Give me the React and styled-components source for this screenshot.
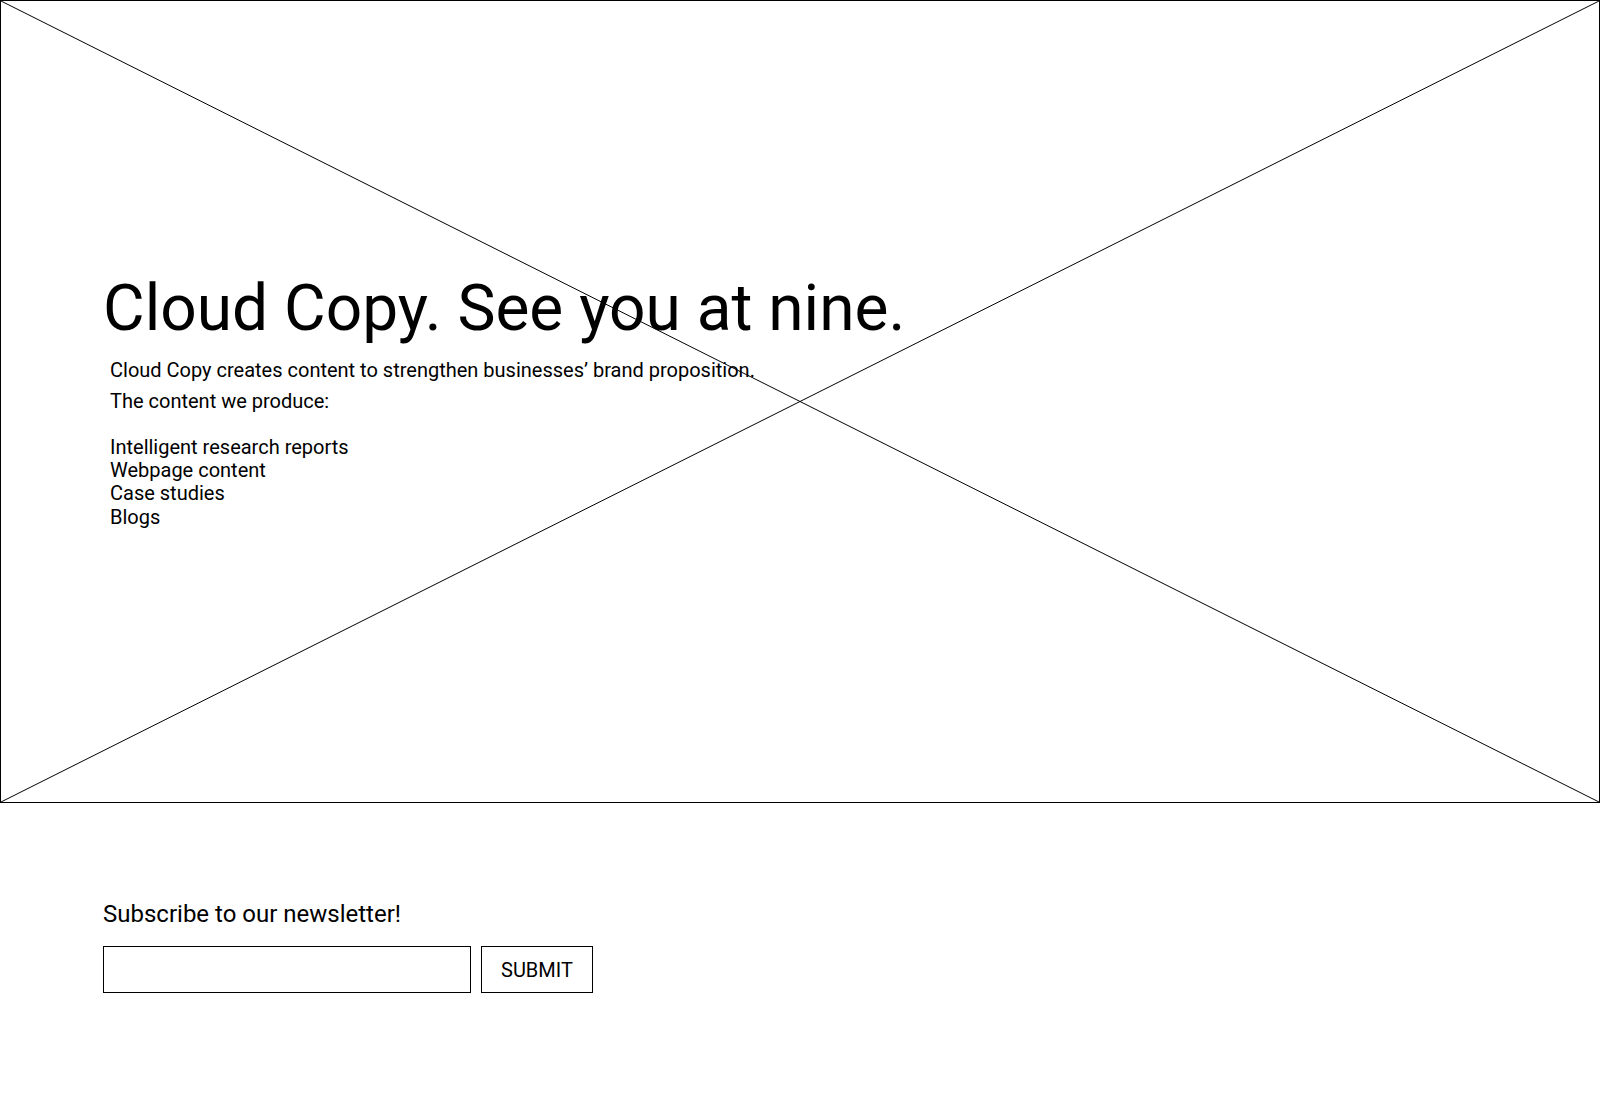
import React from "react";
import styled, { createGlobalStyle } from "styled-components";

const GlobalStyle = createGlobalStyle`
  html, body { margin: 0; padding: 0; background: #ffffff; }
  body { font-family: Roboto, "Liberation Sans", Arial, sans-serif; color: #000000; }
  * { box-sizing: border-box; }
`;

const Page = styled.div`
  width: 1600px;
  min-height: 1093px;
  background: #ffffff;
`;

const Hero = styled.section`
  position: relative;
  height: 803px;
  border: 1px solid #000;
  padding: 270px 0 0 102px;
  overflow: hidden;
`;

const Placeholder = styled.svg`
  position: absolute;
  inset: 0;
  width: 100%;
  height: 100%;
  pointer-events: none;
`;

const HeroContent = styled.div`
  position: relative;
  display: flex;
  flex-direction: column;
`;

const Title = styled.h1`
  margin: 0;
  font-size: 64px;
  font-weight: 400;
  line-height: normal;
  letter-spacing: 0;
`;

const Body = styled.div`
  padding-left: 7px;
  font-size: 20px;
  line-height: normal;
`;

const Para = styled.p`
  margin: ${(p) => p.$top || 0}px 0 0 0;
`;

const List = styled.ul`
  list-style: none;
  margin: 23px 0 0 0;
  padding: 0;
`;

const Item = styled.li`
  line-height: 23.2px;
`;

const Newsletter = styled.section`
  padding: 97px 0 0 103px;
  display: flex;
  flex-direction: column;
  gap: 18px;
`;

const NewsTitle = styled.h2`
  margin: 0;
  font-size: 24px;
  font-weight: 400;
  line-height: normal;
`;

const Form = styled.form`
  display: flex;
  gap: 10px;
`;

const Input = styled.input`
  width: 368px;
  height: 47px;
  border: 1px solid #000;
  border-radius: 0;
  background: #fff;
  font-family: inherit;
  font-size: 19px;
  padding: 0 10px;
  outline: none;
`;

const Submit = styled.button`
  height: 47px;
  padding: 0 19px;
  border: 1px solid #000;
  border-radius: 0;
  background: #fff;
  color: #000;
  font-family: Roboto, "Liberation Sans", Arial, sans-serif;
  font-size: 20px;
  text-transform: uppercase;
  cursor: pointer;
`;

const items = [
  "Intelligent research reports",
  "Webpage content",
  "Case studies",
  "Blogs",
];

export default function App() {
  return (
    <Page>
      <GlobalStyle />
      <Hero>
        <Placeholder viewBox="0 0 1600 803" preserveAspectRatio="none">
          <line x1="0" y1="0" x2="1600" y2="803" stroke="#000" strokeWidth="1" />
          <line x1="0" y1="803" x2="1600" y2="0" stroke="#000" strokeWidth="1" />
        </Placeholder>
        <HeroContent>
          <Title>Cloud Copy. See you at nine.</Title>
          <Body>
            <Para $top={12}>Cloud Copy creates content to strengthen businesses’ brand proposition.</Para>
            <Para $top={7}>The content we produce:</Para>
            <List>
              {items.map((t) => (
                <Item key={t}>{t}</Item>
              ))}
            </List>
          </Body>
        </HeroContent>
      </Hero>
      <Newsletter>
        <NewsTitle>Subscribe to our newsletter!</NewsTitle>
        <Form onSubmit={(e) => e.preventDefault()}>
          <Input type="email" aria-label="Email" />
          <Submit type="submit">Submit</Submit>
        </Form>
      </Newsletter>
    </Page>
  );
}
